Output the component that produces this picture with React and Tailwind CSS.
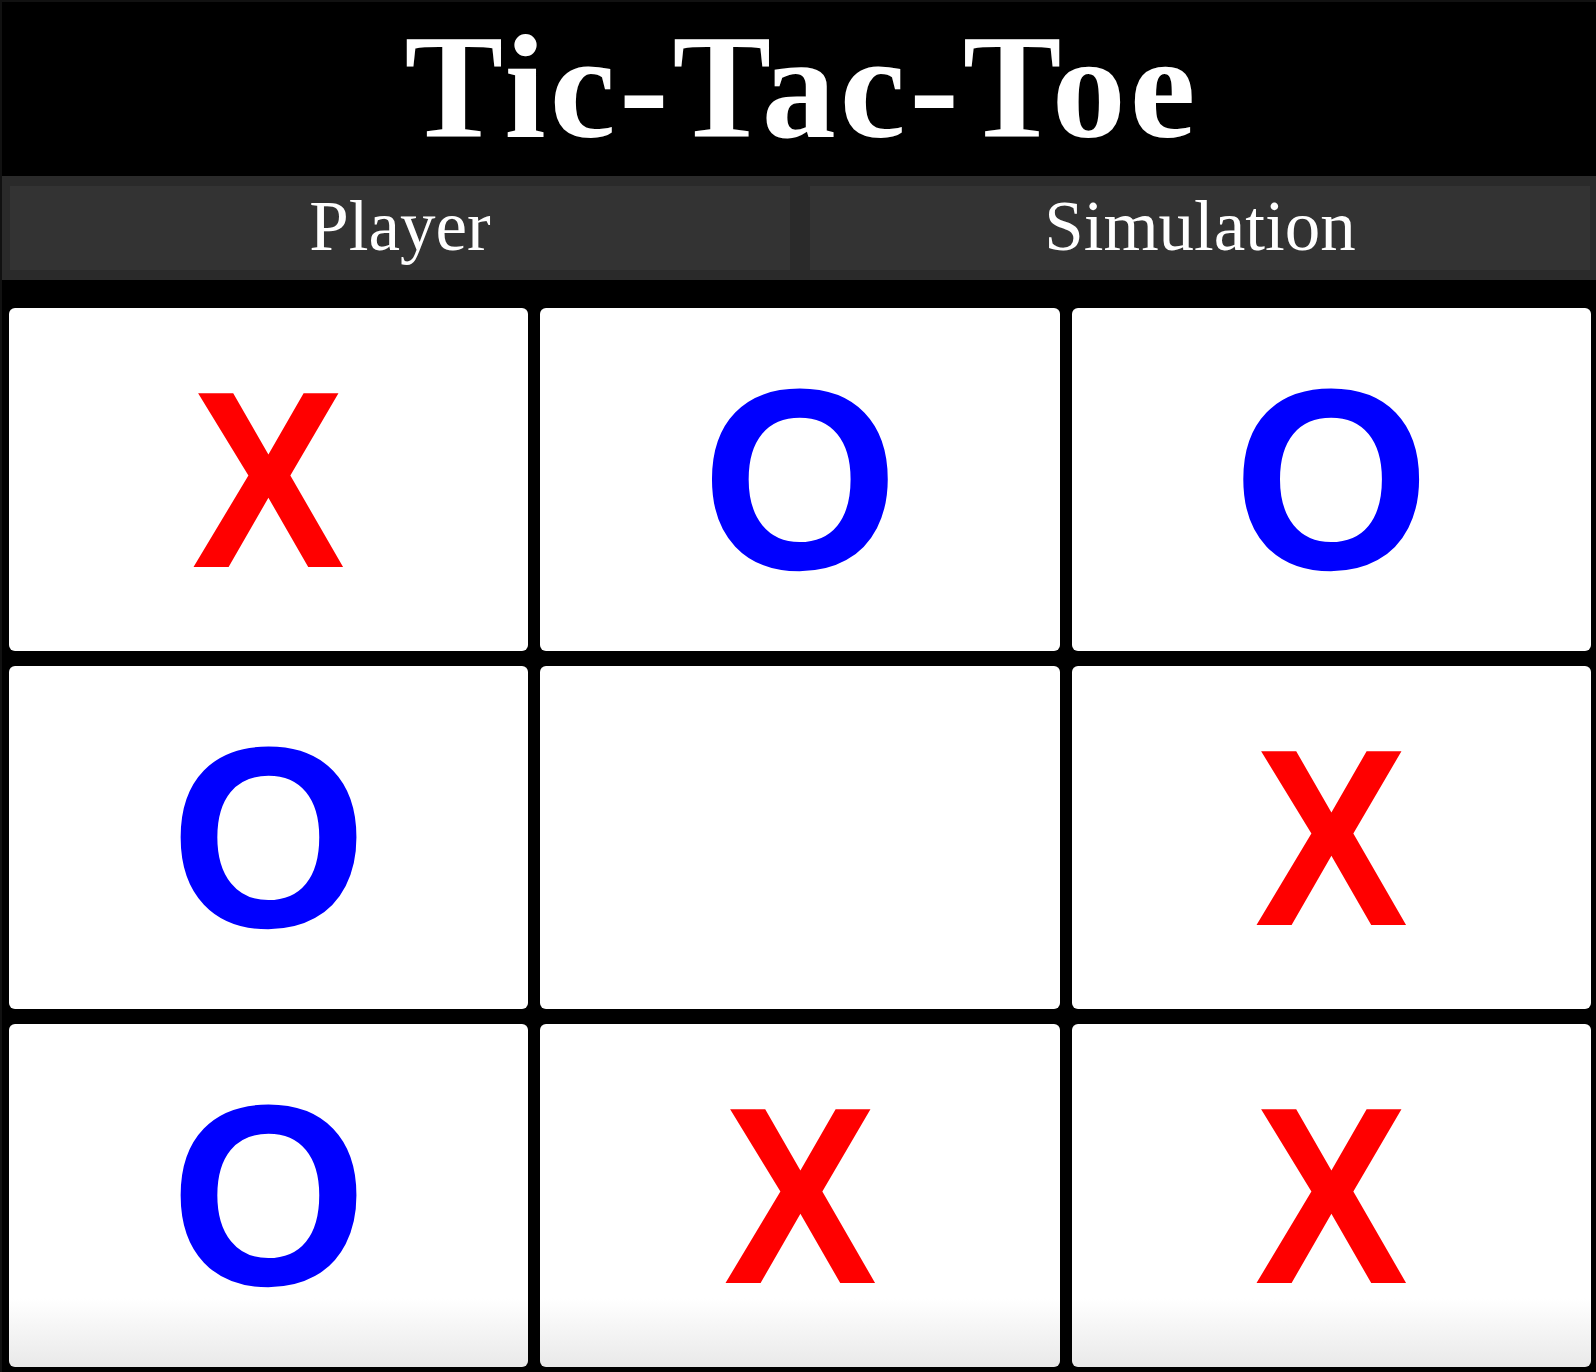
import React from "react";

const board = ["X", "O", "O", "O", "", "X", "O", "X", "X"];

const Cell = ({ value, last }) => (
  <div
    className={
      "flex h-[343px] items-center justify-center rounded-[6px] " +
      (last ? "bg-[linear-gradient(to_bottom,#ffffff_80%,#e9e9e9)]" : "bg-white")
    }
  >
    {value && (
      <span
        className={
          "text-[253px] font-bold leading-none " +
          (value === "X" ? "scale-x-[0.91] text-[#ff0000]" : "scale-y-[1.02] text-[#0000ff]")
        }
        style={{ fontFamily: '"Liberation Sans", Arial, sans-serif' }}
      >
        {value}
      </span>
    )}
  </div>
);

export default function App() {
  return (
    <div
      className="h-[1372px] w-[1596px] overflow-hidden border-l-2 border-t-2 border-[#111] bg-black"
      style={{ fontFamily: '"Liberation Serif", "Times New Roman", serif' }}
    >
      <header className="flex h-[174px] items-center justify-center pb-[5px] pl-[6px]">
        <h1 className="text-[148px] font-bold leading-none tracking-[4px] text-white">Tic-Tac-Toe</h1>
      </header>

      <nav className="flex h-[104px] gap-[20px] bg-[#2a2a2a] py-[10px] pl-[8px] pr-[6px]">
        {["Player", "Simulation"].map((label) => (
          <button
            key={label}
            className="flex flex-1 items-center justify-center bg-[#333333] pb-[3px] text-[71px] leading-none text-white"
          >
            {label}
          </button>
        ))}
      </nav>

      <div className="grid grid-cols-3 gap-x-[12px] gap-y-[15px] pb-[5px] pl-[7px] pr-[5px] pt-[28px]">
        {board.map((value, i) => (
          <Cell key={i} value={value} last={i >= 6} />
        ))}
      </div>
    </div>
  );
}
